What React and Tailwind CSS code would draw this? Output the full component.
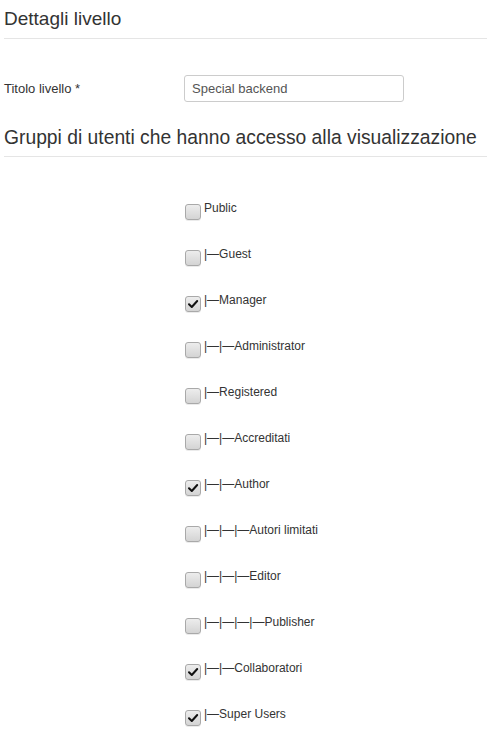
const groups = [
  { name: "Public", checked: false },
  { name: "|—Guest", checked: false },
  { name: "|—Manager", checked: true },
  { name: "|—|—Administrator", checked: false },
  { name: "|—Registered", checked: false },
  { name: "|—|—Accreditati", checked: false },
  { name: "|—|—Author", checked: true },
  { name: "|—|—|—Autori limitati", checked: false },
  { name: "|—|—|—Editor", checked: false },
  { name: "|—|—|—|—Publisher", checked: false },
  { name: "|—|—Collaboratori", checked: true },
  { name: "|—Super Users", checked: true },
];

function CheckBox({ checked }) {
  return (
    <span className="mt-[4px] flex h-[16px] w-[16px] shrink-0 items-center justify-center rounded-[3px] border border-[#a9a9a9] bg-gradient-to-b from-[#ededed] to-[#d4d4d4] shadow-[0_1px_0_rgba(0,0,0,0.08)]">
      {checked && (
        <svg width="12" height="12" viewBox="0 0 12 12">
          <path
            d="M2 6.2 L4.8 9 L10.2 3"
            fill="none"
            stroke="#111"
            strokeWidth="2"
            strokeLinecap="round"
            strokeLinejoin="round"
          />
        </svg>
      )}
    </span>
  );
}

export default function App() {
  return (
    <div
      className="min-h-[742px] bg-white pl-1 text-[#333]"
      style={{ fontFamily: '"Liberation Sans", Arial, sans-serif' }}
    >
      {/* Dettagli livello */}
      <h3 className="border-b border-[#e5e5e5] pt-[7px] pb-[7px] text-[19px] leading-6 font-normal">
        Dettagli livello
      </h3>

      <div className="mt-[36px] flex items-center">
        <label className="w-[180px] text-[13px]">Titolo livello *</label>
        <input
          type="text"
          defaultValue="Special backend"
          className="h-[27px] w-[220px] rounded-[3px] border border-[#ccc] px-[7px] text-[13px] text-[#555] outline-none"
        />
      </div>

      {/* Gruppi */}
      <h3 className="mt-[24px] border-b border-[#e5e5e5] pb-[6px] text-[19.3px] leading-6 font-normal">
        Gruppi di utenti che hanno accesso alla visualizzazione
      </h3>

      <div className="mt-[43px] ml-[181px] flex flex-col">
        {groups.map((g) => (
          <label key={g.name} className="flex h-[46px] items-start gap-[3px]">
            <CheckBox checked={g.checked} />
            <span className="text-[12px] leading-4">{g.name}</span>
          </label>
        ))}
      </div>
    </div>
  );
}
